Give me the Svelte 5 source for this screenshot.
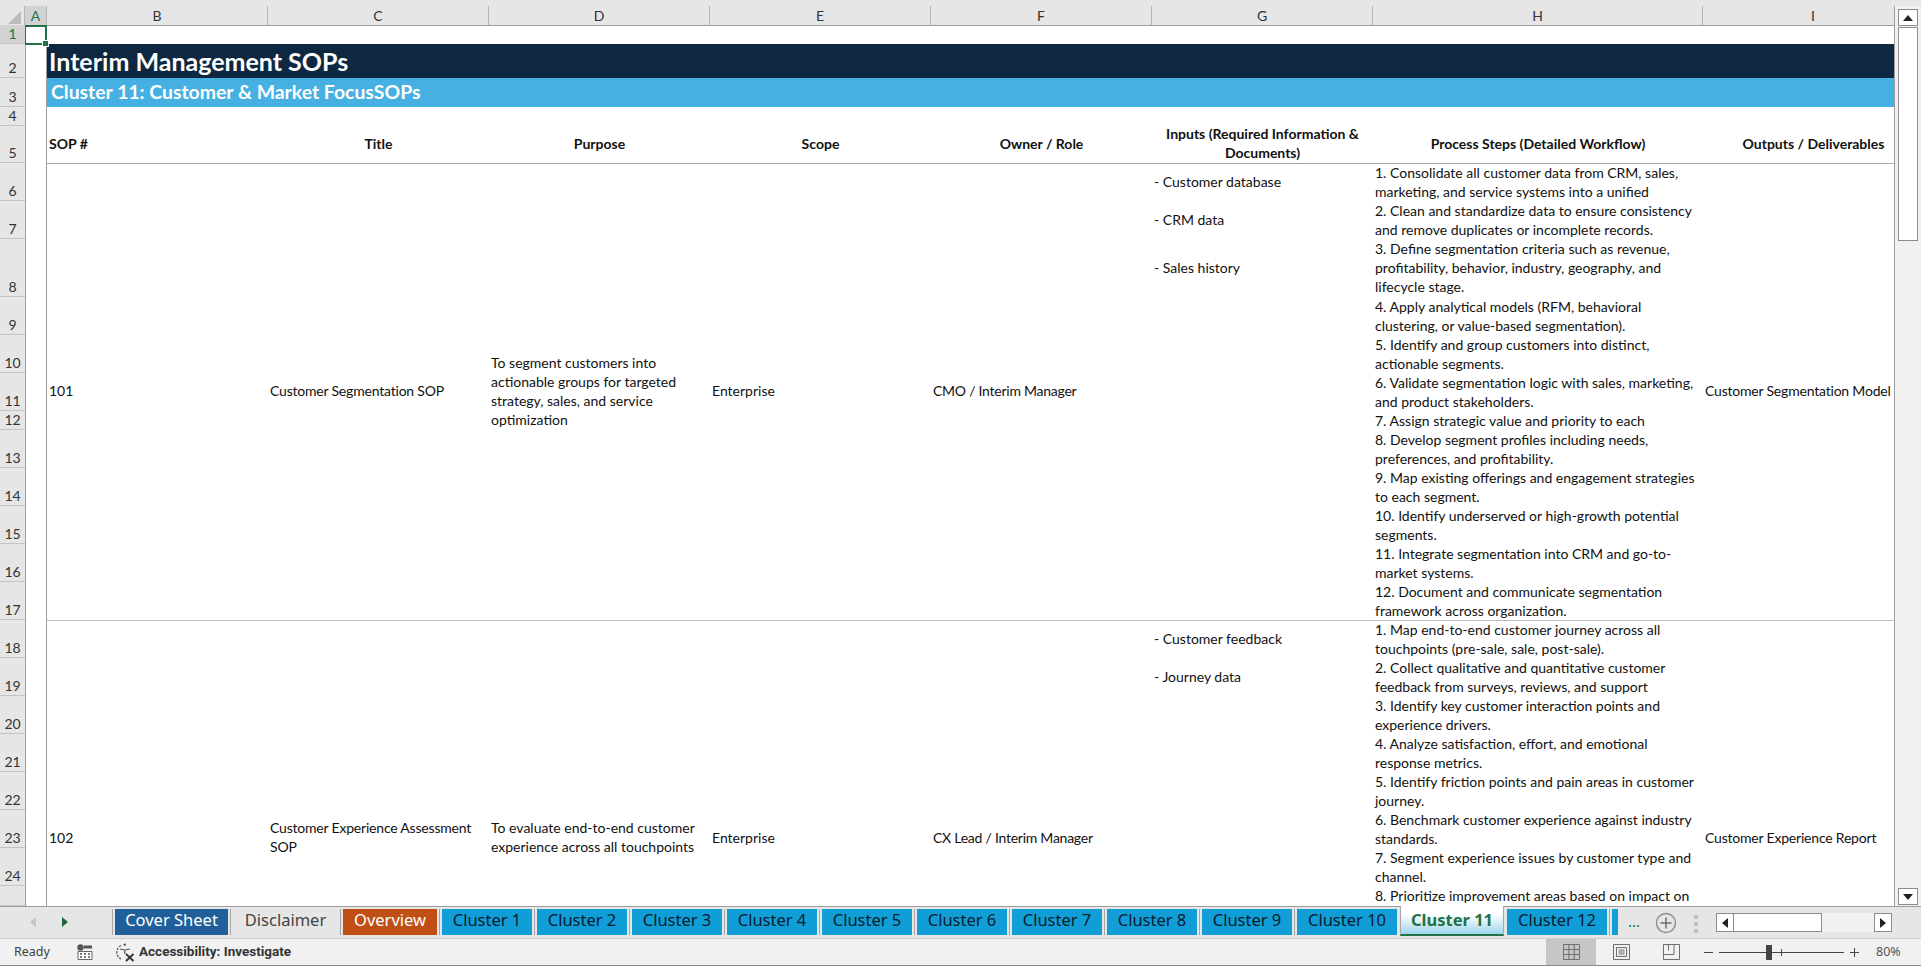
<script>
  const columns = [
    { name: 'A', w: 22, active: true },
    { name: 'B', w: 221 },
    { name: 'C', w: 221 },
    { name: 'D', w: 221 },
    { name: 'E', w: 221 },
    { name: 'F', w: 221 },
    { name: 'G', w: 221 },
    { name: 'H', w: 330 },
    { name: 'I', w: 221 }
  ];

  const rowHeights = [19, 34, 29, 19, 37, 38, 38, 58, 38, 38, 38, 19, 38, 38, 38, 38, 38, 38, 38, 38, 38, 38, 38, 38, 20];

  const sops = [
    {
      id: '101',
      title: 'Customer Segmentation SOP',
      purpose: 'To segment customers into\nactionable groups for targeted\nstrategy, sales, and service\noptimization',
      scope: 'Enterprise',
      owner: 'CMO / Interim Manager',
      output: 'Customer Segmentation Model',
      rows: [37, 38, 58, 38, 38, 38, 19, 38, 38, 38, 38, 38],
      inputs: ['- Customer database', '- CRM data', '- Sales history'],
      steps: [
        '1. Consolidate all customer data from CRM, sales,\nmarketing, and service systems into a unified',
        '2. Clean and standardize data to ensure consistency\nand remove duplicates or incomplete records.',
        '3. Define segmentation criteria such as revenue,\nprofitability, behavior, industry, geography, and\nlifecycle stage.',
        '4. Apply analytical models (RFM, behavioral\nclustering, or value-based segmentation).',
        '5. Identify and group customers into distinct,\nactionable segments.',
        '6. Validate segmentation logic with sales, marketing,\nand product stakeholders.',
        '7. Assign strategic value and priority to each',
        '8. Develop segment profiles including needs,\npreferences, and profitability.',
        '9. Map existing offerings and engagement strategies\nto each segment.',
        '10. Identify underserved or high-growth potential\nsegments.',
        '11. Integrate segmentation into CRM and go-to-\nmarket systems.',
        '12. Document and communicate segmentation\nframework across organization.'
      ]
    },
    {
      id: '102',
      title: 'Customer Experience Assessment\nSOP',
      purpose: 'To evaluate end-to-end customer\nexperience across all touchpoints',
      scope: 'Enterprise',
      owner: 'CX Lead / Interim Manager',
      output: 'Customer Experience Report',
      rows: [37, 38, 38, 38, 38, 38, 38, 38, 132],
      inputs: ['- Customer feedback', '- Journey data'],
      steps: [
        '1. Map end-to-end customer journey across all\ntouchpoints (pre-sale, sale, post-sale).',
        '2. Collect qualitative and quantitative customer\nfeedback from surveys, reviews, and support',
        '3. Identify key customer interaction points and\nexperience drivers.',
        '4. Analyze satisfaction, effort, and emotional\nresponse metrics.',
        '5. Identify friction points and pain areas in customer\njourney.',
        '6. Benchmark customer experience against industry\nstandards.',
        '7. Segment experience issues by customer type and\nchannel.',
        '8. Prioritize improvement areas based on impact on\nsatisfaction and retention.'
      ]
    }
  ];

  const headers = [
    { text: 'SOP #', left: true },
    { text: 'Title' },
    { text: 'Purpose' },
    { text: 'Scope' },
    { text: 'Owner / Role' },
    { text: 'Inputs (Required Information &\nDocuments)' },
    { text: 'Process Steps (Detailed Workflow)' },
    { text: 'Outputs / Deliverables' }
  ];

  const tabs = [
    { name: 'Cover Sheet', w: 113, kind: 'navy' },
    { name: 'Disclaimer', w: 105, kind: 'plain' },
    { name: 'Overview', w: 94, kind: 'rust' },
    { name: 'Cluster 1', w: 90 },
    { name: 'Cluster 2', w: 90 },
    { name: 'Cluster 3', w: 90 },
    { name: 'Cluster 4', w: 90 },
    { name: 'Cluster 5', w: 90 },
    { name: 'Cluster 6', w: 90 },
    { name: 'Cluster 7', w: 90 },
    { name: 'Cluster 8', w: 90 },
    { name: 'Cluster 9', w: 90 },
    { name: 'Cluster 10', w: 100 },
    { name: 'Cluster 11', w: 104, kind: 'active' },
    { name: 'Cluster 12', w: 100 },
    { name: '', w: 6 }
  ];
</script>

<div class="app">
  <div class="top-trim"></div>

  <div class="work">
    <div class="pane">
      <div class="col-heads">
        <div class="corner"><span class="corner-tri"></span></div>
        {#each columns as col}
          <div class="col-head" class:on={col.active} style="width: {col.w}px">{col.name}</div>
        {/each}
      </div>

      <div class="pane-body">
        <div class="row-heads">
          {#each rowHeights as h, i}
            <div class="row-head" class:on={i === 0} style="height: {h}px">
              {#if i < 24}{i + 1}{/if}
            </div>
          {/each}
        </div>

        <div class="sheet">
          <div class="cursor"></div>
          <div class="band-spacer"></div>
          <div class="band-navy">Interim Management SOPs</div>
          <div class="band-blue">Cluster 11: Customer &amp; Market FocusSOPs</div>
          <div class="spacer-row"></div>

          <div class="head-row">
            {#each headers as h}
              <div class="head-cell" class:left={h.left}>{h.text}</div>
            {/each}
          </div>

          {#each sops as sop}
            <div class="sop" style="grid-template-rows: {sop.rows.map((r) => r + 'px').join(' ')}">
              <div class="cell merged col-b">{sop.id}</div>
              <div class="cell merged col-c">{sop.title}</div>
              <div class="cell merged col-d">{sop.purpose}</div>
              <div class="cell merged col-e">{sop.scope}</div>
              <div class="cell merged col-f">{sop.owner}</div>
              {#each sop.inputs as input, i}
                <div class="cell col-g" style="grid-row: {i + 1}">{input}</div>
              {/each}
              {#each sop.steps as step, i}
                <div class="cell col-h" style="grid-row: {i + 1}">{step}</div>
              {/each}
              <div class="cell merged col-i">{sop.output}</div>
            </div>
          {/each}
        </div>
      </div>
    </div>

    <div class="vscroll">
      <div class="vbtn"><span class="tri up"></span></div>
      <div class="vthumb"></div>
      <div class="vtrack"></div>
      <div class="vbtn"><span class="tri down"></span></div>
    </div>
  </div>

  <div class="tabbar">
    <div class="tab-nav">
      <span class="nav-tri prev"></span>
      <span class="nav-tri next"></span>
    </div>
    <i class="sep"></i>
    <div class="tabs">
      {#each tabs as tab, i}
        <div class="tab {tab.kind || 'cluster'}" style="width: {tab.w}px">{tab.name}</div>
        {#if tab.kind !== 'active' && tabs[i + 1]?.kind !== 'active' && i < tabs.length - 1}
          <i class="sep"></i>
        {:else if i < tabs.length - 1}
          <i class="nosep"></i>
        {/if}
      {/each}
    </div>
    <div class="more">...</div>
    <svg class="add" width="22" height="22" viewBox="0 0 22 22">
      <circle cx="11" cy="11" r="9.5" fill="none" stroke="#8c8c8c" stroke-width="1.4" />
      <path d="M11 5.5v11M5.5 11h11" stroke="#6e6e6e" stroke-width="1.5" />
    </svg>
    <div class="grip"><b></b><b></b><b></b></div>
    <div class="hscroll">
      <div class="hbtn"><span class="tri left"></span></div>
      <div class="hthumb"></div>
      <div class="htrack"></div>
      <div class="hbtn"><span class="tri right"></span></div>
    </div>
  </div>

  <div class="status">
    <span class="ready">Ready</span>
    <svg class="macro" width="16" height="16" viewBox="0 0 16 16">
      <circle cx="3.5" cy="3.5" r="3.2" fill="#555" />
      <path d="M7 1.5h8v3H7z" fill="#555" />
      <path d="M1 7.5h14v8H1z" fill="#fff" stroke="#666" />
      <path d="M3 10h2M7 10h2M11 10h2M3 13h2M7 13h2M11 13h2" stroke="#555" stroke-width="1.3" />
    </svg>
    <svg class="a11y" width="22" height="20" viewBox="0 0 22 20">
      <path d="M6 3.5A7.5 7.5 0 0 0 6 17" fill="none" stroke="#555" stroke-width="1.2" stroke-dasharray="2.4 1.2" />
      <circle cx="9.800" cy="2.6" r="1.2" fill="#555" />
      <path d="M5 7l4.800 1 5.200-1M9.800 8v4" fill="none" stroke="#555" stroke-width="1.2" />
      <path d="M11 12l7.500 7M18.500 12L11 19" stroke="#333" stroke-width="1.8" />
    </svg>
    <span class="a11y-text">Accessibility: Investigate</span>

    <div class="status-right">
      <div class="view on">
        <svg width="17" height="16" viewBox="0 0 17 16">
          <path d="M.5.5h16v15H.5zM.5 5.500h16M.5 10.500h16M5.800.5v15M11.200.5v15" fill="none" stroke="#6f6f6f" />
        </svg>
      </div>
      <div class="view">
        <svg width="17" height="16" viewBox="0 0 17 16">
          <path d="M.5.5h16v15H.5z" fill="none" stroke="#6f6f6f" />
          <path d="M3.500 3.500h10v9h-10zM5.500 6h6M5.500 8h6M5.500 10h6" fill="none" stroke="#6f6f6f" />
        </svg>
      </div>
      <div class="view">
        <svg width="17" height="16" viewBox="0 0 17 16">
          <path d="M.5.5h16v15H.5zM.5 10.500h10.500V.5M5.500.5v6" fill="none" stroke="#6f6f6f" />
        </svg>
      </div>
      <div class="zoom">
        <span class="zoom-sign minus"></span>
        <div class="slider"><span class="knob"></span><span class="mid"></span></div>
        <span class="zoom-sign plus"></span>
        <span class="pct">80%</span>
      </div>
    </div>
  </div>
</div>

<style>
  :global(body) {
    margin: 0;
    background: #e6e6e6;
  }

  .app {
    width: 1921px;
    height: 966px;
    display: flex;
    flex-direction: column;
    overflow: hidden;
    font-family: 'Lato', 'Liberation Sans', sans-serif;
    color: #111;
    background: #e6e6e6;
  }

  .top-trim {
    height: 6px;
    flex: none;
  }

  .work {
    height: 900px;
    flex: none;
    display: flex;
  }

  .pane {
    width: 1894px;
    flex: none;
    display: flex;
    flex-direction: column;
    overflow: hidden;
  }

  .col-heads {
    height: 19px;
    flex: none;
    display: flex;
    border-bottom: 1px solid #9e9e9e;
    box-sizing: content-box;
    margin-bottom: -1px;
    position: relative;
    z-index: 1;
  }

  .corner {
    width: 25px;
    flex: none;
    position: relative;
    border-right: 1px solid #b5b5b5;
    box-sizing: border-box;
  }

  .corner-tri {
    position: absolute;
    right: 3px;
    bottom: 1px;
    width: 0;
    height: 0;
    border-style: solid;
    border-width: 0 0 13px 13px;
    border-color: transparent transparent #bcbcbc transparent;
  }

  .col-head {
    flex: none;
    box-sizing: border-box;
    border-right: 1px solid #b5b5b5;
    text-align: center;
    font-size: 14px;
    line-height: 19px;
    color: #333;
  }

  .col-head.on {
    background: #d2d2d2;
    color: #217346;
  }

  .pane-body {
    flex: 1;
    display: flex;
    min-height: 0;
  }

  .row-heads {
    width: 25px;
    flex: none;
    border-right: 1px solid #9e9e9e;
    box-sizing: content-box;
    margin-right: -1px;
    position: relative;
    z-index: 1;
    overflow: hidden;
  }

  .row-head {
    box-sizing: border-box;
    border-bottom: 1px solid #c4c4c4;
    display: flex;
    align-items: flex-end;
    justify-content: center;
    font-size: 14px;
    line-height: 18px;
    color: #333;
  }

  .row-head.on {
    background: #d2d2d2;
    color: #217346;
  }

  .sheet {
    flex: 1;
    min-width: 0;
    background: #fff;
    overflow: hidden;
    position: relative;
    padding-left: 22px;
    font-size: 14px;
    line-height: 19px;
  }

  .cursor {
    position: absolute;
    left: -1px;
    top: 0;
    width: 23px;
    height: 20px;
    box-sizing: border-box;
    border: 2px solid #217346;
    z-index: 2;
  }

  .cursor::after {
    content: '';
    position: absolute;
    right: -4px;
    bottom: -4px;
    width: 5px;
    height: 5px;
    background: #217346;
    border: 1px solid #fff;
  }

  .band-spacer {
    height: 19px;
  }

  .band-navy {
    height: 34px;
    background: #0e2841;
    color: #fff;
    font-size: 25px;
    font-weight: 700;
    line-height: 34px;
    padding-left: 2px;
    border-left: 1px solid #9e9e9e;
    margin-left: -1px;
  }

  .band-blue {
    height: 29px;
    background: #45b0e1;
    color: #fff;
    font-size: 19.400px;
    font-weight: 700;
    line-height: 28px;
    padding-left: 4px;
    border-left: 1px solid #9e9e9e;
    margin-left: -1px;
  }

  .spacer-row {
    height: 19px;
    border-left: 1px solid #9e9e9e;
    margin-left: -1px;
  }

  .head-row {
    height: 38px;
    display: grid;
    grid-template-columns: 221px 221px 221px 221px 221px 221px 330px 221px;
    grid-template-rows: 34px;
    align-items: center;
    border-bottom: 1px solid #a6a6a6;
    border-left: 1px solid #9e9e9e;
    margin-left: -1px;
    box-sizing: border-box;
    width: 1878px;
  }

  .head-cell {
    text-align: center;
    font-weight: 700;
    white-space: pre-line;
    font-size: 14px;
  }

  .head-cell.left {
    text-align: left;
    padding-left: 2px;
  }

  .sop {
    display: grid;
    grid-template-columns: 221px 221px 221px 221px 221px 221px 330px 221px;
    border-bottom: 1px solid #bcbcbc;
    border-left: 1px solid #9e9e9e;
    margin-left: -1px;
    box-sizing: border-box;
    width: 1878px;
  }

  .cell {
    display: flex;
    align-items: center;
    padding: 0 0 1px 2px;
    box-sizing: border-box;
    white-space: pre-line;
    min-width: 0;
  }

  .merged {
    grid-row: 1 / -1;
    padding-bottom: 3px;
  }

  .col-b { grid-column: 1; }
  .col-c { grid-column: 2; letter-spacing: -0.2px; }
  .col-d { grid-column: 3; }
  .col-e { grid-column: 4; }
  .col-f { grid-column: 5; letter-spacing: -0.25px; }
  .col-g { grid-column: 6; padding-bottom: 2px; }
  .col-h { grid-column: 7; }
  .col-i { grid-column: 8; letter-spacing: -0.2px; }

  .vscroll {
    flex: 1;
    display: flex;
    flex-direction: column;
    align-items: center;
    padding: 3px 0 1px 0;
    background: #f1f1f1;
    border-left: 1px solid #9e9e9e;
    box-sizing: border-box;
  }

  .vbtn {
    width: 20px;
    height: 17px;
    flex: none;
    box-sizing: border-box;
    background: #fff;
    border: 1px solid #8c8c8c;
    display: flex;
    align-items: center;
    justify-content: center;
  }

  .vthumb {
    width: 20px;
    height: 214px;
    flex: none;
    margin-top: 1px;
    box-sizing: border-box;
    background: #fff;
    border: 1px solid #8c8c8c;
  }

  .vtrack {
    flex: 1;
  }

  .tri {
    width: 0;
    height: 0;
    border-style: solid;
  }

  .tri.up {
    border-width: 0 5px 6px 5px;
    border-color: transparent transparent #222 transparent;
  }

  .tri.down {
    border-width: 6px 5px 0 5px;
    border-color: #222 transparent transparent transparent;
  }

  .tri.left {
    border-width: 5px 6px 5px 0;
    border-color: transparent #222 transparent transparent;
  }

  .tri.right {
    border-width: 5px 0 5px 6px;
    border-color: transparent transparent transparent #222;
  }

  .tabbar {
    height: 33px;
    flex: none;
    display: flex;
    align-items: flex-start;
    box-sizing: border-box;
    border-top: 1px solid #9e9e9e;
    border-bottom: 1px solid #cfcfcf;
    padding-top: 2px;
    background: #e6e6e6;
  }

  .tab-nav {
    width: 110px;
    height: 26px;
    flex: none;
    position: relative;
  }

  .nav-tri {
    position: absolute;
    top: 8px;
    width: 0;
    height: 0;
    border-style: solid;
  }

  .nav-tri.prev {
    left: 30px;
    border-width: 5px 6px 5px 0;
    border-color: transparent #c4c4c4 transparent transparent;
  }

  .nav-tri.next {
    left: 62px;
    border-width: 5px 0 5px 6px;
    border-color: transparent transparent transparent #1b6b3a;
  }

  .sep {
    width: 1px;
    height: 26px;
    flex: none;
    margin: 0 2px;
    background: #a6a6a6;
  }

  .nosep {
    width: 3px;
    height: 26px;
    flex: none;
  }

  .tabs {
    display: flex;
    flex: none;
    width: 1503px;
    height: 30px;
    margin-top: -3px;
    padding-top: 3px;
    box-sizing: border-box;
    overflow: hidden;
    align-items: flex-start;
  }

  .tab {
    height: 26px;
    flex: none;
    box-sizing: border-box;
    font-family: 'Noto Sans', 'Open Sans', sans-serif;
    font-size: 16.500px;
    line-height: 21px;
    text-align: center;
    white-space: nowrap;
  }

  .tab.cluster {
    background: #119ed7;
    color: #06202f;
  }

  .tab.navy {
    background: #215f9a;
    color: #fff;
  }

  .tab.rust {
    background: #c04f15;
    color: #fff;
  }

  .tab.plain {
    color: #444;
  }

  .tab.active {
    height: 30px;
    margin-top: -3px;
    background: linear-gradient(#fff, #fff 30%, #9fd5ec);
    color: #217346;
    font-weight: 700;
    border-bottom: 2px solid #217346;
    border-left: 1px solid #a6a6a6;
    border-right: 1px solid #a6a6a6;
    line-height: 27px;
  }

  .more {
    width: 28px;
    flex: none;
    text-align: center;
    margin-left: 2px;
    font-family: 'Noto Sans', sans-serif;
    font-size: 15px;
    line-height: 24px;
    color: #1b6b3a;
  }

  .add {
    flex: none;
    margin: 3px 0 0 7px;
  }

  .grip {
    width: 6px;
    flex: none;
    margin: 6px 0 0 17px;
    display: flex;
    flex-direction: column;
    gap: 3px;
  }

  .grip b {
    display: block;
    width: 4px;
    height: 4px;
    background: #bdbdbd;
  }

  .hscroll {
    width: 176px;
    height: 19px;
    flex: none;
    margin: 4px 0 0 16px;
    display: flex;
    background: #f1f1f1;
  }

  .hbtn {
    width: 18px;
    flex: none;
    box-sizing: border-box;
    background: #fff;
    border: 1px solid #8c8c8c;
    display: flex;
    align-items: center;
    justify-content: center;
  }

  .hthumb {
    width: 88px;
    flex: none;
    box-sizing: border-box;
    background: #fff;
    border: 1px solid #8c8c8c;
    border-left: none;
  }

  .htrack {
    flex: 1;
  }

  .status {
    flex: 1;
    display: flex;
    align-items: center;
    background: #f1f1f1;
    border-bottom: 1px solid #8a8a8a;
    box-sizing: border-box;
    font-family: 'Noto Sans', 'Open Sans', sans-serif;
    font-size: 12.500px;
    color: #3f3f3f;
  }

  .ready {
    margin: 0 0 2px 14px;
    width: 63px;
    flex: none;
  }

  .macro {
    flex: none;
  }

  .a11y {
    flex: none;
    margin-left: 22px;
  }

  .a11y-text {
    margin: 0 0 2px 2px;
    font-weight: 700;
    font-family: 'Roboto', sans-serif;
    font-size: 13.500px;
    color: #333;
  }

  .status-right {
    margin-left: auto;
    height: 100%;
    display: flex;
    align-items: center;
  }

  .view {
    width: 50px;
    height: 100%;
    display: flex;
    align-items: center;
    justify-content: center;
  }

  .view.on {
    background: #c6c6c6;
  }

  .zoom {
    display: flex;
    align-items: center;
    width: 225px;
    padding-left: 8px;
    box-sizing: border-box;
  }

  .zoom-sign {
    position: relative;
    width: 9px;
    height: 9px;
    flex: none;
  }

  .zoom-sign::before {
    content: '';
    position: absolute;
    left: 0;
    right: 0;
    top: 4px;
    height: 1px;
    background: #444;
  }

  .plus::after {
    content: '';
    position: absolute;
    top: 0;
    bottom: 0;
    left: 4px;
    width: 1px;
    background: #444;
  }

  .slider {
    position: relative;
    width: 125px;
    height: 1px;
    margin: 0 6px;
    background: #444;
    flex: none;
  }

  .knob {
    position: absolute;
    left: 47px;
    top: -7px;
    width: 6px;
    height: 15px;
    background: #444;
  }

  .mid {
    position: absolute;
    left: 62px;
    top: -3px;
    width: 1px;
    height: 7px;
    background: #444;
  }

  .pct {
    margin: 0 0 2px 17px;
    font-size: 12.500px;
    color: #555;
  }
</style>
